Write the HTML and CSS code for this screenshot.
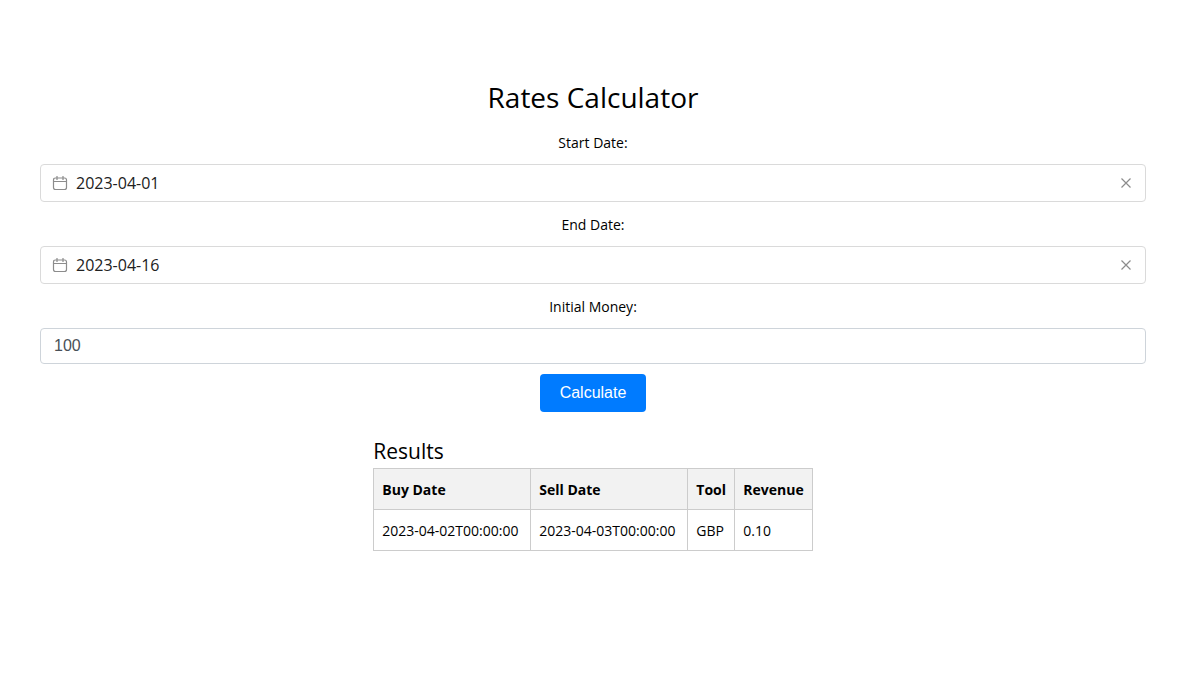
FILE: index.html
```html
<!DOCTYPE html>
<html lang="en">
<head>
<meta charset="utf-8">
<title>Rates Calculator</title>
<link rel="stylesheet" href="styles.css">
</head>
<body>
<main class="page">
  <h1 class="title">Rates Calculator</h1>
  <form class="form">
    <label class="label" for="start">Start Date:</label>
    <div class="field">
      <svg class="icon" viewBox="0 0 16 16" aria-hidden="true"><path d="M3.500 3h9q2 0 2 2v7.500q0 2-2 2h-9q-2 0-2-2V5q0-2 2-2zM1.500 6.500h13M5 1v4M11 1v4"/></svg>
      <input class="date" id="start" type="text" value="2023-04-01">
      <button class="clear" type="button" aria-label="Clear start date"><svg class="icon" viewBox="0 0 16 16"><path d="M3.500 3.500l9 9M12.500 3.500l-9 9"/></svg></button>
    </div>
    <label class="label" for="end">End Date:</label>
    <div class="field">
      <svg class="icon" viewBox="0 0 16 16" aria-hidden="true"><path d="M3.500 3h9q2 0 2 2v7.500q0 2-2 2h-9q-2 0-2-2V5q0-2 2-2zM1.500 6.500h13M5 1v4M11 1v4"/></svg>
      <input class="date" id="end" type="text" value="2023-04-16">
      <button class="clear" type="button" aria-label="Clear end date"><svg class="icon" viewBox="0 0 16 16"><path d="M3.500 3.500l9 9M12.500 3.500l-9 9"/></svg></button>
    </div>
    <label class="label" for="money">Initial Money:</label>
    <input class="money" id="money" type="text" inputmode="decimal" value="100">
    <button class="submit" type="button">Calculate</button>
  </form>
  <section class="results">
    <h2 class="subtitle">Results</h2>
    <table class="table">
      <colgroup><col class="col-date"><col class="col-date"><col class="col-tool"><col class="col-revenue"></colgroup>
      <thead><tr><th>Buy Date</th><th>Sell Date</th><th>Tool</th><th>Revenue</th></tr></thead>
      <tbody><tr><td>2023-04-02T00:00:00</td><td>2023-04-03T00:00:00</td><td>GBP</td><td>0.10</td></tr></tbody>
    </table>
  </section>
</main>
</body>
</html>
```
FILE: styles.css
```css
* { box-sizing: border-box; }
body {
  margin: 0;
  font: 14px/20px "Open Sans", "Noto Sans", sans-serif;
  color: #000;
  background: #fff;
}
.page {
  display: flex;
  flex-direction: column;
  align-items: center;
  padding: 77px 48px 40px 40px;
}
.title { margin: 0 0 16px; font-size: 28px; line-height: 40px; font-weight: 400; }
.form { display: flex; flex-direction: column; align-items: center; align-self: stretch; }
.label { margin-bottom: 11px; }
.field {
  display: flex;
  align-items: center;
  gap: 8px;
  width: 100%;
  height: 38px;
  margin-bottom: 13px;
  padding: 0 11px;
  border: 1px solid #dadada;
  border-radius: 4px;
}
.icon { display: block; flex: none; width: 16px; height: 16px; fill: none; stroke: #8c8c8c; stroke-width: 1.2; }
.date { flex: 1; min-width: 0; padding: 0; border: 0; outline: 0; background: none; font: 16px/22px "Open Sans", sans-serif; color: #212121; }
.clear { padding: 0; border: 0; background: none; cursor: pointer; }
.money {
  width: 100%;
  height: 36px;
  margin-bottom: 10px;
  padding: 0 13px;
  border: 1px solid #ced4da;
  border-radius: 4px;
  font: 16px/22px "Liberation Sans", Arial, sans-serif;
  color: #495057;
}
.submit {
  height: 38px;
  padding: 0 20px;
  border: 0;
  border-radius: 4px;
  background: #007bff;
  color: #fff;
  font: 16px/18px "Liberation Sans", Arial, sans-serif;
  cursor: pointer;
}
.results { margin-top: 23px; }
.subtitle { margin: 0 0 1px; font-size: 21px; line-height: 32px; font-weight: 400; }
.table { border-collapse: collapse; }
.col-date { width: 157px; }
.col-tool { width: 47px; }
.col-revenue { width: 77px; }
.table th, .table td { height: 41px; padding: 1px 8px 0; border: 1px solid #ccc; text-align: left; }
.table th { background: #f2f2f2; font-weight: 700; }
```
